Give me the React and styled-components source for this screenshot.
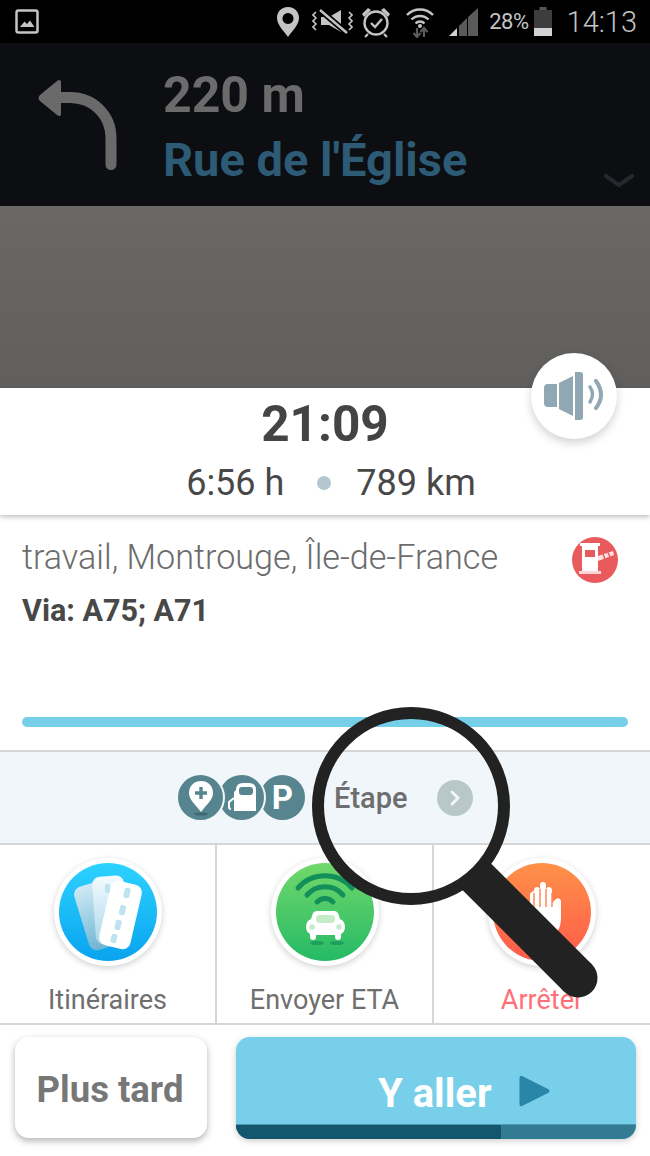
import React from "react";
import styled, { createGlobalStyle } from "styled-components";

const Global = createGlobalStyle`
  html, body { margin: 0; padding: 0; background: #fff; }
  * { box-sizing: border-box; }
  body { font-family: Roboto, "Liberation Sans", sans-serif; }
`;

const Screen = styled.div`
  position: relative;
  width: 650px;
  height: 1156px;
  overflow: hidden;
  background: #fff;
  display: flex;
  flex-direction: column;
`;

const StatusBar = styled.div`
  height: 43px;
  background: #000;
  display: flex;
  align-items: center;
  padding: 0 13px 0 15px;
  color: #c4c4c4;
`;
const StatusLeft = styled.div`
  display: flex;
  margin-right: auto;
`;
const StatusIcons = styled.div`
  display: flex;
  align-items: center;
`;
const StatusSlot = styled.div`
  display: flex;
  margin-left: ${(p) => p.$gap}px;
`;
const Percent = styled.span`
  font-size: 22px;
  letter-spacing: -0.5px;
  margin-left: 11px;
  margin-right: 5px;
`;
const Clock = styled.span`
  font-size: 29px;
  font-weight: 300;
  margin-left: 15px;
`;

const NavBar = styled.div`
  height: 163px;
  background: #0c0e12;
  display: flex;
  padding: 0 0 0 36px;
  position: relative;
`;
const TurnIcon = styled.svg`
  width: 84px;
  height: 96px;
  margin-top: 35px;
  flex: none;
`;
const NavText = styled.div`
  margin-left: 43px;
  display: flex;
  flex-direction: column;
`;
const Distance = styled.div`
  font-size: 50px;
  font-weight: 700;
  line-height: 54px;
  margin-top: 25px;
  color: #6b6b6b;
`;
const Street = styled.div`
  font-size: 47px;
  font-weight: 700;
  line-height: 54px;
  margin-top: 11px;
  color: #2d5a74;
`;
const NavChevron = styled.svg`
  position: absolute;
  right: 16px;
  top: 131px;
  width: 30px;
  height: 14px;
`;

const MapArea = styled.div`
  height: 182px;
  background: linear-gradient(#696867, #605f5d);
`;

const SpeakerButton = styled.div`
  position: absolute;
  left: 531px;
  top: 353px;
  width: 86px;
  height: 86px;
  border-radius: 50%;
  background: #fff;
  box-shadow: 0 4px 10px rgba(0, 0, 0, 0.18);
  display: flex;
  align-items: center;
  justify-content: center;
  z-index: 3;
`;

const Summary = styled.div`
  height: 127px;
  background: #fff;
  box-shadow: 0 2px 5px rgba(0, 0, 0, 0.25);
  display: flex;
  flex-direction: column;
  align-items: center;
  position: relative;
  z-index: 1;
`;
const Arrival = styled.div`
  font-size: 49.5px;
  font-weight: 700;
  color: #444;
  line-height: 54px;
  margin-top: 9px;
`;
const TripRow = styled.div`
  display: flex;
  align-items: center;
  font-size: 36px;
  color: #484848;
  line-height: 40px;
  margin-top: 12px;
  padding-left: 12px;
`;
const Dot = styled.span`
  width: 14px;
  height: 14px;
  border-radius: 50%;
  background: #b4c6d0;
  margin: 0 25px 0 33px;
`;

const Destination = styled.div`
  height: 235px;
  padding: 22px 22px 0;
  display: flex;
  flex-direction: column;
`;
const DestTop = styled.div`
  display: flex;
  justify-content: space-between;
  align-items: flex-start;
  padding-right: 10px;
`;
const DestName = styled.div`
  font-size: 34.15px;
  font-weight: 300;
  color: #6c6c6c;
  line-height: 40px;
`;
const Via = styled.div`
  font-size: 30.5px;
  font-weight: 700;
  color: #484848;
  line-height: 34px;
  margin-top: 11px;
`;
const ProgressTrack = styled.div`
  height: 10px;
  border-radius: 5px;
  background: #76cfe9;
  margin-top: 89px;
`;

const StopRow = styled.div`
  height: 95px;
  margin-bottom: -2px;
  background: #f0f6fa;
  border-top: 2px solid #d6d6d6;
  border-bottom: 2px solid #d6d6d6;
  display: flex;
  align-items: center;
  padding-left: 176px;
`;
const StopIcons = styled.div`
  display: flex;
`;
const StopCircle = styled.div`
  width: 49px;
  height: 49px;
  border-radius: 50%;
  background: #56858f;
  border: 2px solid #f0f6fa;
  margin-left: ${(p) => (p.$first ? "0" : "-8px")};
  display: flex;
  align-items: center;
  justify-content: center;
  color: #fff;
  font-size: 33px;
  font-weight: 700;
  position: relative;
  z-index: ${(p) => p.$z};
`;
const StopLabel = styled.span`
  font-size: 29px;
  font-weight: 500;
  color: #6e6e6e;
  margin-left: 27px;
`;
const StopArrow = styled.div`
  width: 36px;
  height: 36px;
  border-radius: 50%;
  background: #b8c8c8;
  margin-left: 29px;
  display: flex;
  align-items: center;
  justify-content: center;
`;

const Actions = styled.div`
  height: 182px;
  display: grid;
  grid-template-columns: 217px 217px 216px;
  border-bottom: 2px solid #d6d6d6;
`;
const Action = styled.div`
  display: flex;
  flex-direction: column;
  align-items: center;
  padding-top: 15px;
  border-right: ${(p) => (p.$last ? "none" : "2px solid #d6d6d6")};
`;
const ActionDisc = styled.div`
  width: 108px;
  height: 108px;
  border-radius: 50%;
  background: #fff;
  box-shadow: 0 2px 6px rgba(0, 0, 0, 0.18);
  display: flex;
`;
const ActionLabel = styled.div`
  font-size: 27px;
  color: ${(p) => p.$color};
  line-height: 30px;
  margin-top: 19px;
`;

const BottomBar = styled.div`
  display: flex;
  padding: 12px 14px 0 15px;
  gap: 29px;
`;
const LaterButton = styled.div`
  width: 192px;
  height: 101px;
  border-radius: 14px;
  background: #fff;
  box-shadow: 0 3px 7px rgba(0, 0, 0, 0.3);
  display: flex;
  align-items: center;
  justify-content: center;
  padding: 4px 2px 0 0;
  font-size: 36.5px;
  font-weight: 700;
  color: #777;
`;
const GoButton = styled.div`
  flex: 1;
  height: 102px;
  border-radius: 14px;
  overflow: hidden;
  background: #77cfe9;
  box-shadow: 0 2px 6px rgba(0, 0, 0, 0.2);
  display: flex;
  flex-direction: column;
`;
const GoContent = styled.div`
  flex: 1;
  display: flex;
  align-items: center;
  padding-left: 142px;
  padding-top: 20px;
  gap: 27px;
  font-size: 40px;
  font-weight: 700;
  color: #fff;
`;
const GoText = styled.span`
  margin-top: 6px;
`;
const GoProgress = styled.div`
  height: 15px;
  background: #327b93;
  border-top: 1px solid #4a9ab5;
`;
const GoFill = styled.div`
  height: 100%;
  background: #14566b;
`;

const Magnifier = styled.svg`
  position: absolute;
  left: 0;
  top: 0;
  width: 650px;
  height: 1156px;
  z-index: 5;
  pointer-events: none;
`;

const Svg = ({ w, h, children, ...r }) => (
  <svg width={w} height={h} viewBox={`0 0 ${w} ${h}`} {...r}>{children}</svg>
);

export default function App() {
  return (
    <Screen>
      <Global />
      <StatusBar>
        <StatusLeft>
          <Svg w={24} h={25}>
            <rect x="1.5" y="1.5" width="21" height="22" rx="2" fill="none" stroke="#c4c4c4" strokeWidth="2.5" />
            <path d="M5 18 L9.5 12.5 L12 15 L15 11.5 L19.5 18 Z" fill="#c4c4c4" />
          </Svg>
        </StatusLeft>
        <StatusIcons>
          <Svg w={24} h={30}>
            <path fillRule="evenodd" fill="#c4c4c4" d="M12 0 C5 0 1 5 1 11 C1 18 8 24 12 30 C16 24 23 18 23 11 C23 5 19 0 12 0 Z M12 6 a5.5 5.5 0 1 1 -0.01 0 Z" />
          </Svg>
          <StatusSlot $gap={12}>
            <Svg w={41} h={30}>
              <path d="M4 5 L1 8 L4 11 L1 14 L4 17 L1 20 L4 23" fill="none" stroke="#c4c4c4" strokeWidth="1.6" />
              <path d="M37 5 L40 8 L37 11 L40 14 L37 17 L40 20 L37 23" fill="none" stroke="#c4c4c4" strokeWidth="1.6" />
              <path d="M9 10 L17 10 L29 3 L29 25 L17 18 L9 18 Z" fill="#c4c4c4" />
              <path d="M8 3 L35 26" stroke="#000" strokeWidth="6" />
              <path d="M8 3 L35 26" stroke="#c4c4c4" strokeWidth="2.4" />
            </Svg>
          </StatusSlot>
          <StatusSlot $gap={8}>
            <Svg w={30} h={32}>
              <circle cx="15" cy="17" r="11.5" fill="none" stroke="#c4c4c4" strokeWidth="2.4" />
              <path d="M10 17 L14 21 L21 13" fill="none" stroke="#c4c4c4" strokeWidth="2.4" />
              <path d="M1 8 L7 2 L10 4 L3 11 Z M29 8 L23 2 L20 4 L27 11 Z" fill="#c4c4c4" />
              <path d="M7 28 L4 31 M23 28 L26 31" stroke="#c4c4c4" strokeWidth="2.2" />
            </Svg>
          </StatusSlot>
          <StatusSlot $gap={14}>
            <Svg w={30} h={32}>
              <path d="M2 9 A18 18 0 0 1 28 9 M6.5 13.5 A12 12 0 0 1 23.5 13.5 M10.5 17.5 A6 6 0 0 1 19.5 17.5" fill="none" stroke="#c4c4c4" strokeWidth="2.4" />
              <circle cx="15" cy="20" r="2" fill="#c4c4c4" />
              <path d="M12 22 V30 M8.5 27 L12 31 L15.5 27" fill="none" stroke="#5b5b5b" strokeWidth="2.2" />
              <path d="M19 31 V23 M15.5 26 L19 22 L22.5 26" fill="none" stroke="#5b5b5b" strokeWidth="2.2" />
            </Svg>
          </StatusSlot>
          <StatusSlot $gap={14}>
            <Svg w={29} h={28}>
              <path d="M0 28 L8 20 L8 28 Z" fill="#d0d0d0" />
              <path d="M10 18 L18 10 L18 28 L10 28 Z" fill="#5a5a5a" />
              <path d="M19 9 L29 0 L29 28 L19 28 Z" fill="#5a5a5a" />
            </Svg>
          </StatusSlot>
          <Percent>28%</Percent>
          <Svg w={18} h={29}>
            <rect x="5.5" y="0" width="7" height="4" fill="#555" />
            <rect x="0" y="3" width="18" height="18" fill="#3d3d3d" />
            <rect x="0" y="21" width="18" height="8" fill="#d2d2d2" />
          </Svg>
          <Clock>14:13</Clock>
        </StatusIcons>
      </StatusBar>

      <NavBar>
        <TurnIcon viewBox="0 0 84 96">
          <path d="M14 19.5 H34 C58 19.5 75 38 75 60 V86.5" fill="none" stroke="#6a6a6a" strokeWidth="11" strokeLinecap="round" />
          <path d="M21 3 L4 17 Q1 20 4 23 L21 37 Q25 40 25 35 V5 Q25 0 21 3 Z" fill="#6a6a6a" />
        </TurnIcon>
        <NavText>
          <Distance>220 m</Distance>
          <Street>Rue de l'Église</Street>
        </NavText>
        <NavChevron viewBox="0 0 30 14">
          <path d="M2 2 L15 11 L28 2" fill="none" stroke="#25282c" strokeWidth="4" strokeLinecap="round" />
        </NavChevron>
      </NavBar>

      <MapArea />

      <SpeakerButton>
        <Svg w={62} h={48} style={{ marginRight: 1 }}>
          <path d="M5 12 H14 V35 H5 Q1 35 1 31 V16 Q1 12 5 12 Z" fill="#8fa8b3" />
          <path d="M16 11 L30 4 V44 L16 37 Z" fill="#8fa8b3" />
          <path d="M32 0 H37 Q40 0 40 3 V45 Q40 48 37 48 H32 Z" fill="#8fa8b3" />
          <path d="M47 15 Q52 22 47 30" fill="none" stroke="#8fa8b3" strokeWidth="3.4" strokeLinecap="round" />
          <path d="M53 9 Q63 23 53 36" fill="none" stroke="#8fa8b3" strokeWidth="4" strokeLinecap="round" />
        </Svg>
      </SpeakerButton>

      <Summary>
        <Arrival>21:09</Arrival>
        <TripRow>
          <span>6:56 h</span>
          <Dot />
          <span>789 km</span>
        </TripRow>
      </Summary>

      <Destination>
        <DestTop>
          <DestName>travail, Montrouge, Île-de-France</DestName>
          <Svg w={46} h={46}>
            <circle cx="23" cy="23" r="23" fill="#e85a5c" />
            <rect x="10" y="8" width="16" height="26" fill="#fff" />
            <rect x="8" y="6" width="20" height="3" fill="#fff" />
            <rect x="13" y="13" width="10" height="7" fill="#e85a5c" />
            <rect x="7" y="34" width="22" height="3" fill="#ffd5d5" />
            <path d="M26 19 L41 14 L42 18 L26 24 Z" fill="#ffe2e2" />
            <path d="M31 17 L33 22 M36 15.5 L38 20" stroke="#e85a5c" strokeWidth="1.5" />
          </Svg>
        </DestTop>
        <Via>Via: A75; A71</Via>
        <ProgressTrack />
      </Destination>

      <StopRow>
        <StopIcons>
          <StopCircle $first $z={3}>
            <Svg w={30} h={36}>
              <path fill="#fff" d="M15 1 C7 1 3 7 3 13 C3 20 10 25 15 32 C20 25 27 20 27 13 C27 7 23 1 15 1 Z" />
              <path d="M15 7 V19 M9 13 H21" stroke="#56858f" strokeWidth="3.4" />
              <ellipse cx="15" cy="34" rx="7" ry="1.6" fill="#3f6a73" />
            </Svg>
          </StopCircle>
          <StopCircle $z={2}>
            <Svg w={30} h={32}>
              <path fill="#fff" d="M9 8 Q9 1 16 1 H22 Q29 1 29 8 V29 H7 V10 Z" />
              <rect x="12" y="5" width="14" height="8" rx="3" fill="#56858f" />
              <path d="M7 16 L2 20 V25 Q2 27 4 27" fill="none" stroke="#fff" strokeWidth="2" />
            </Svg>
          </StopCircle>
          <StopCircle $z={1}>P</StopCircle>
        </StopIcons>
        <StopLabel>Étape</StopLabel>
        <StopArrow>
          <Svg w={12} h={18}>
            <path d="M3 3 L9 9 L3 15" fill="none" stroke="#f0f6fa" strokeWidth="3" strokeLinecap="round" />
          </Svg>
        </StopArrow>
      </StopRow>

      <Actions>
        <Action>
          <ActionDisc>
            <Svg w={108} h={108}>
              <defs>
                <linearGradient id="blueG" x1="0" y1="0" x2="0" y2="1">
                  <stop offset="0" stopColor="#2dd2ff" />
                  <stop offset="1" stopColor="#09a3ee" />
                </linearGradient>
                <linearGradient id="backCard" x1="0" y1="0" x2="0" y2="1">
                  <stop offset="0" stopColor="#cfeaf4" />
                  <stop offset="1" stopColor="#6db5d3" />
                </linearGradient>
                <linearGradient id="midCard" x1="0" y1="0" x2="0" y2="1">
                  <stop offset="0" stopColor="#f4fbfe" />
                  <stop offset="1" stopColor="#a8d6ea" />
                </linearGradient>
              </defs>
              <circle cx="54" cy="54" r="49" fill="url(#blueG)" />
              <rect x="27" y="25" width="32" height="66" rx="8" fill="url(#backCard)" transform="rotate(-17 43 58)" />
              <rect x="40" y="18" width="32" height="68" rx="8" fill="url(#midCard)" transform="rotate(-4 56 52)" />
              <rect x="50.5" y="24" width="32" height="66" rx="8" fill="#fff" transform="rotate(13 66.5 57)" />
              <g fill="#bfe2f0">
                <rect x="70" y="30" width="6" height="10" rx="2" transform="rotate(13 73 35)" />
                <rect x="65.5" y="47" width="6" height="10" rx="2" transform="rotate(13 68 52)" />
                <rect x="61" y="62" width="6" height="10" rx="2" transform="rotate(13 64 67)" />
                <rect x="57" y="76" width="6" height="9" rx="2" transform="rotate(13 60 80)" />
              </g>
              <rect x="51" y="26" width="5" height="9" rx="2" fill="#bfe2f0" />
            </Svg>
          </ActionDisc>
          <ActionLabel $color="#6f6f6f">Itinéraires</ActionLabel>
        </Action>
        <Action>
          <ActionDisc>
            <Svg w={108} h={108}>
              <defs>
                <linearGradient id="greenG" x1="0" y1="0" x2="0" y2="1">
                  <stop offset="0" stopColor="#72d86a" />
                  <stop offset="1" stopColor="#25ba66" />
                </linearGradient>
              </defs>
              <circle cx="54" cy="54" r="49" fill="url(#greenG)" />
              <g fill="none" stroke="#13905a" strokeWidth="5" strokeLinecap="round">
                <path d="M27 30 A36 36 0 0 1 81 30" />
                <path d="M36 37 A24 24 0 0 1 72 37" />
                <path d="M46 44 A11 11 0 0 1 62 44" />
              </g>
              <path fill="#fff" d="M46 53 H63 Q67 53 68 58 L69 61 Q74 63 74 69 Q74 74 70 76 V79 Q70 82 67 82 Q64 82 64 79 V77 H45 V79 Q45 82 42 82 Q39 82 39 79 V76 Q35 74 35 69 Q35 63 40 61 L41 58 Q42 53 46 53 Z" />
              <rect x="45" y="57" width="19" height="8" rx="4" fill="#c5ebc9" />
              <circle cx="41" cy="69" r="2.8" fill="#c5ebc9" />
              <circle cx="68" cy="69" r="2.8" fill="#c5ebc9" />
              <ellipse cx="46" cy="85" rx="7" ry="2" fill="#1f9d5c" />
              <ellipse cx="66" cy="85" rx="7" ry="2" fill="#1f9d5c" />
            </Svg>
          </ActionDisc>
          <ActionLabel $color="#6f6f6f">Envoyer ETA</ActionLabel>
        </Action>
        <Action $last>
          <ActionDisc>
            <Svg w={108} h={108}>
              <defs>
                <linearGradient id="orangeG" x1="0" y1="0" x2="0" y2="1">
                  <stop offset="0" stopColor="#ff9148" />
                  <stop offset="1" stopColor="#ff5a4b" />
                </linearGradient>
              </defs>
              <circle cx="54" cy="54" r="49" fill="url(#orangeG)" />
              <g transform="translate(2 3)">
                <path fill="#fff" d="M44 30 Q44 26 47 26 Q50 26 50 30 V24 Q50 21 53 21 Q56 21 56 24 V30 Q56 26 59 26 Q62 26 62 30 V42 L66 38 Q70 36 71 40 V56 Q71 74 58 74 H50 Q40 74 40 60 V34 Q40 31 44 30 Z" />
                <path d="M50 28 V46 M56 28 V46 M44 32 V46 M62 32 V46" stroke="#ff8a5a" strokeWidth="1.5" />
              </g>
            </Svg>
          </ActionDisc>
          <ActionLabel $color="#ff6f78">Arrêter</ActionLabel>
        </Action>
      </Actions>

      <BottomBar>
        <LaterButton>Plus tard</LaterButton>
        <GoButton>
          <GoContent>
            <GoText>Y aller</GoText>
            <Svg w={32} h={34}>
              <path d="M3 2 Q0.5 1 0.5 4 V30 Q0.5 33 3 32 L29 19 Q32 17 29 15 Z" fill="#2a86a6" />
            </Svg>
          </GoContent>
          <GoProgress>
            <GoFill style={{ width: `${(265 / 400) * 100}%` }} />
          </GoProgress>
        </GoButton>
      </BottomBar>

      <Magnifier viewBox="0 0 650 1156">
        <circle cx="411" cy="806" r="93" fill="none" stroke="#222" strokeWidth="12" />
        <path d="M476 876 L578 978" stroke="#222" strokeWidth="39" />
        <circle cx="578" cy="978" r="19.5" fill="#222" />
      </Magnifier>
    </Screen>
  );
}
